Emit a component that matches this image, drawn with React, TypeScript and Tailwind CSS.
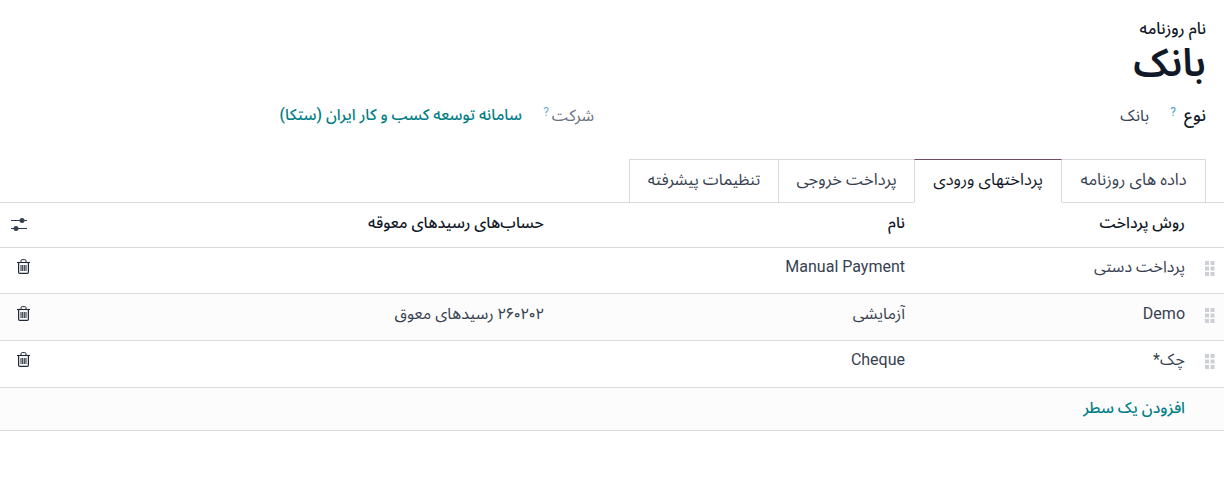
import React from "react";

const F = "font-['Roboto','Noto_Sans_Arabic','DejaVu_Sans',sans-serif]";

function Grip() {
  return (
    <svg width="10" height="15" viewBox="0 0 10 15" className="block">
      {[0, 5.5, 11].map((y) =>
        [0, 5.5].map((x) => <rect key={`${x}-${y}`} x={x} y={y} width="4" height="4" fill="#ccd0d4" />)
      )}
    </svg>
  );
}

function Trash() {
  return (
    <svg width="13" height="15" viewBox="0 0 13 15" className="block" fill="none" stroke="#1f2937">
      <path d="M0 3.5h13" strokeWidth="1.1" />
      <path d="M4 3.5V1.8C4 1 4.5.6 5.2.6h2.6C8.500.6 9 1 9 1.800v1.700" strokeWidth="1" />
      <path d="M1.600 3.500v9.700c0 .8.500 1.200 1.200 1.200h7.400c.7 0 1.200-.4 1.200-1.200V3.500" strokeWidth="1.200" />
      <path d="M4 6v6M5.700 6v6M7.300 6v6M9 6v6" strokeWidth="1" />
    </svg>
  );
}

function Sliders() {
  return (
    <svg width="16" height="13" viewBox="0 0 16 13" className="block" fill="#374151" stroke="#2d3a55">
      <path d="M0 2.500h16M0 10.500h16" strokeWidth="1" />
      <circle cx="11" cy="2.500" r="2.500" stroke="none" />
      <circle cx="5" cy="10.500" r="2.500" stroke="none" />
    </svg>
  );
}

const rows = [
  { m: "پرداخت دستی", n: "Manual Payment", a: "", d: "", h: "h-[46px] pt-[7px]", bg: "" },
  { m: "Demo", n: "آزمایشی", a: "رسیدهای معوق", d: "۲۶۰۲۰۲", h: "h-[47px] pt-[8px]", bg: "bg-[#fcfcfc]" },
  { m: "چک*", n: "Cheque", a: "", d: "", h: "h-[47px] pt-[7px]", bg: "" },
];

export default function App() {
  return (
    <div dir="rtl" className={`${F} w-[1224px] h-[487px] bg-white text-[16px] text-[#374151] overflow-hidden`}>
      <div className="pt-[18px] pr-[18px]">
        <div className="text-[16px] font-medium leading-[21px] text-[#111827]">نام روزنامه</div>
        <div className="text-[39px] leading-[46px] font-semibold text-[#111827] mt-[1px]">بانک</div>
      </div>
      <div className="flex mt-[18px] pr-[18px] h-[24px] items-center">
        <div className="flex w-[612px] items-center">
          <span className="font-medium text-[17px] text-[#111827] w-[30px]">نوع</span>
          <span className="text-[12px] leading-none text-[#3f9fd0] w-[27px] mb-[8px]">?</span>
          <span>بانک</span>
        </div>
        <div className="flex items-center">
          <span className="text-[#6b7280] w-[45px]">شرکت</span>
          <span className="text-[12px] leading-none text-[#6fb0cc] w-[27px] mb-[8px]">?</span>
          <span className="font-medium text-[15.600px] text-[#017e84]">سامانه توسعه کسب و کار ایران (ستکا)</span>
        </div>
      </div>
      <div className="flex mt-[31px] pr-[18px] h-[44px] border-b border-[#d8dadd]">
        {[
          ["داده های روزنامه", "w-[145px] text-[16.500px]", false],
          ["پرداختهای ورودی", "w-[148px] text-[16.500px]", true],
          ["پرداخت خروجی", "w-[137px] text-[16.500px]", false],
          ["تنظیمات پیشرفته", "w-[150px]", false],
        ].map(([t, w, active], i) => (
          <div
            key={i}
            className={`${w} h-[44px] pb-[2px] flex items-center justify-center border border-[#d8dadd] ${i > 0 ? "-mr-px" : ""} ${
              active ? "border-t-[#714b67] border-b-white text-[#111827] relative z-10" : ""
            }`}
          >
            {t as string}
          </div>
        ))}
      </div>
      <div className="flex h-[45px] pb-[2px] items-center border-b border-[#d8dadd] font-medium text-[15.600px] text-[#111827]">
        <div className="w-[39px] shrink-0" />
        <div className="w-[280px] shrink-0">روش پرداخت</div>
        <div className="w-[361px] shrink-0">نام</div>
        <div className="flex-1">حساب‌های رسیدهای معوقه</div>
        <div className="w-[38px] shrink-0 flex justify-center"><Sliders /></div>
      </div>
      {rows.map((r) => (
        <div key={r.m} className={`flex ${r.h} items-start border-b border-[#d8dadd] ${r.bg}`}>
          <div className="w-[39px] shrink-0 flex justify-start pr-[9px] pt-[6px]"><Grip /></div>
          <div className="w-[280px] shrink-0">{r.m}</div>
          <div className="w-[361px] shrink-0">{r.n}</div>
          <div className="flex-1">
            {r.d && (
              <>
                <span className="font-['Vazirmatn',sans-serif]">{r.d}</span> {r.a}
              </>
            )}
          </div>
          <div className="w-[47px] shrink-0 flex justify-center pt-[4px]"><Trash /></div>
        </div>
      ))}
      <div className="h-[43px] pt-[9px] pr-[39px] border-b border-[#d8dadd] bg-[#fcfcfc] text-[15.600px] text-[#017e84] font-medium">افزودن یک سطر</div>
    </div>
  );
}
